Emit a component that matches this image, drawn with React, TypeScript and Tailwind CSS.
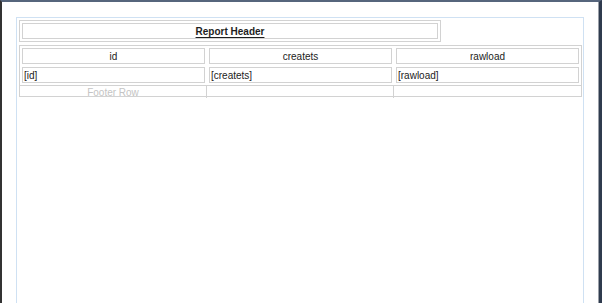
const columns = ['id', 'createts', 'rawload']

function Box({ children, className = '' }: { children?: React.ReactNode; className?: string }) {
  return <div className={`h-[16px] border border-[#d2d2d2] pt-[1px] text-[10px] leading-[14px] ${className}`}>{children}</div>
}

export default function App() {
  return (
    <div
      className="flex h-[303px] w-[602px] overflow-hidden border-t-2 border-r-[3px] border-l-2 border-t-[#56657c] border-r-[#2f3b4e] border-l-[#333333] bg-white"
      style={{ fontFamily: '"Liberation Sans", Arial, sans-serif' }}
    >
      <div className="flex flex-1 border-r border-[#9a9fa8] pt-[15px] pl-[14px]">
        <div className="h-[400px] w-[568px] border-x border-t border-[#cfe1f3] px-[2px] pt-[2px]">
          {/* report header */}
          <div className="w-[422px] border border-[#d2d2d2] p-[2px]">
            <Box className="text-center font-bold text-[#1e1e1e] underline underline-offset-[2px]">Report Header</Box>
          </div>

          {/* detail table */}
          <div className="mt-[3px] w-[563px] border border-[#d2d2d2] text-[#222222]">
            <div className="grid grid-cols-[187px_187px_187px] pt-[2px] pb-[1px]">
              {columns.map((c) => (
                <div key={c} className="px-[2px]">
                  <Box className="text-center">{c}</Box>
                </div>
              ))}
            </div>
            <div className="grid grid-cols-[187px_187px_187px] py-[2px]">
              {columns.map((c) => (
                <div key={c} className="px-[2px]">
                  <Box className="pl-[1px]">[{c}]</Box>
                </div>
              ))}
            </div>
            <div className="grid h-[11px] grid-cols-[187px_187px_187px] border-t border-[#d2d2d2]">
              <div className="border-r border-[#d2d2d2] pt-[1px] text-center text-[10px] leading-[11px] text-[#c4c4c4]">Footer Row</div>
              <div className="border-r border-[#d2d2d2]" />
              <div />
            </div>
          </div>
        </div>
      </div>
    </div>
  )
}
